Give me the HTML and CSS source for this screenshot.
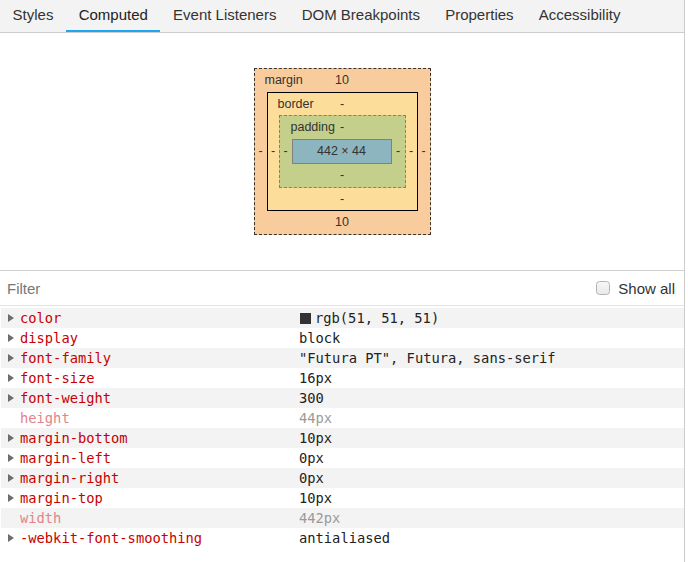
FILE: index.html
```html
<!DOCTYPE html>
<html>
<head>
<meta charset="utf-8">
<link rel="stylesheet" href="styles.css">
</head>
<body>
<div class="panel">
  <nav class="tabs">
    <div class="tab">Styles</div>
    <div class="tab active">Computed</div>
    <div class="tab">Event Listeners</div>
    <div class="tab">DOM Breakpoints</div>
    <div class="tab">Properties</div>
    <div class="tab">Accessibility</div>
  </nav>

  <section class="boxmodel-pane">
    <div class="bm bm-margin">
      <span class="bm-label">margin</span>
      <span class="bm-top">10</span>
      <span class="bm-left">-</span>
      <div class="bm bm-border">
        <span class="bm-label">border</span>
        <span class="bm-top">-</span>
        <span class="bm-left">-</span>
        <div class="bm bm-padding">
          <span class="bm-label">padding</span>
          <span class="bm-top">-</span>
          <span class="bm-left">-</span>
          <div class="bm-content">442 × 44</div>
          <span class="bm-right">-</span>
          <span class="bm-bottom">-</span>
        </div>
        <span class="bm-right">-</span>
        <span class="bm-bottom">-</span>
      </div>
      <span class="bm-right">-</span>
      <span class="bm-bottom">10</span>
    </div>
  </section>

  <div class="filter-bar">
    <span class="filter">Filter</span>
    <label class="show-all"><input class="check" type="checkbox"><span>Show all</span></label>
  </div>

  <ul class="props">
    <li class="prop"><span class="arrow"></span><span class="name">color</span><span class="value"><span class="swatch"></span>rgb(51, 51, 51)</span></li>
    <li class="prop"><span class="arrow"></span><span class="name">display</span><span class="value">block</span></li>
    <li class="prop"><span class="arrow"></span><span class="name">font-family</span><span class="value">"Futura PT", Futura, sans-serif</span></li>
    <li class="prop"><span class="arrow"></span><span class="name">font-size</span><span class="value">16px</span></li>
    <li class="prop"><span class="arrow"></span><span class="name">font-weight</span><span class="value">300</span></li>
    <li class="prop inherited"><span class="noarrow"></span><span class="name">height</span><span class="value">44px</span></li>
    <li class="prop"><span class="arrow"></span><span class="name">margin-bottom</span><span class="value">10px</span></li>
    <li class="prop"><span class="arrow"></span><span class="name">margin-left</span><span class="value">0px</span></li>
    <li class="prop"><span class="arrow"></span><span class="name">margin-right</span><span class="value">0px</span></li>
    <li class="prop"><span class="arrow"></span><span class="name">margin-top</span><span class="value">10px</span></li>
    <li class="prop inherited"><span class="noarrow"></span><span class="name">width</span><span class="value">442px</span></li>
    <li class="prop"><span class="arrow"></span><span class="name">-webkit-font-smoothing</span><span class="value">antialiased</span></li>
  </ul>
</div>
</body>
</html>
```
FILE: styles.css
```css
html, body {
  margin: 0;
  padding: 0;
  background: #fff;
}
body {
  font-family: "Liberation Sans", Arial, sans-serif;
  color: #333;
}
.panel {
  width: 684px;
  height: 562px;
  border-right: 1px solid #cccccc;
  box-sizing: content-box;
}

/* tabs */
.tabs {
  display: flex;
  height: 33px;
  box-sizing: border-box;
  background: #f3f3f3;
  border-bottom: 1px solid #cccccc;
}
.tab {
  height: 32px;
  box-sizing: border-box;
  padding: 0 12.6px;
  font-size: 15px;
  line-height: 30px;
  color: #333;
  border-bottom: 2px solid transparent;
  white-space: nowrap;
}
.tab.active {
  border-bottom-color: #1fa6f0;
  color: #222;
}

/* box model */
.boxmodel-pane {
  display: flex;
  justify-content: center;
  padding: 35px 0;
  border-bottom: 1px solid #d0d0d0;
  font-size: 12.5px;
  color: #333;
}
.bm {
  display: grid;
  grid-template-rows: 23px auto 23px;
}
.bm > span {
  align-self: center;
  line-height: 15px;
  text-align: center;
}
.bm-label {
  grid-row: 1;
  grid-column: 1 / -1;
  justify-self: start;
  padding-left: 10px;
}
.bm-top {
  grid-row: 1;
  grid-column: 1 / -1;
  justify-self: center;
}
.bm-left {
  grid-row: 2;
  grid-column: 1;
}
.bm-right {
  grid-row: 2;
  grid-column: 3;
}
.bm-bottom {
  grid-row: 3;
  grid-column: 1 / -1;
  justify-self: center;
}
.bm-margin {
  grid-template-columns: 12px auto 12px;
  border: 1px dashed #333;
  background: #f9cc9d;
}
.bm-border {
  grid-row: 2;
  grid-column: 2;
  grid-template-columns: 11px auto 11px;
  grid-template-rows: 22px auto 22px;
  border: 1px solid #000;
  background: #fddd9a;
}
.bm-padding {
  grid-row: 2;
  grid-column: 2;
  grid-template-columns: 12px auto 13px;
  border: 1px dashed #808080;
  background: #c3cf8a;
}
.bm-padding > .bm-label {
  padding-left: 11px;
}
.bm-content {
  grid-row: 2;
  grid-column: 2;
  width: 100px;
  height: 25px;
  box-sizing: border-box;
  border: 1px solid #808080;
  background: #8cb5c0;
  text-align: center;
  line-height: 23px;
}

/* filter */
.filter-bar {
  display: flex;
  align-items: center;
  justify-content: space-between;
  height: 34px;
  border-bottom: 1px solid #e4e4e4;
  padding: 0 9px 0 7px;
  font-size: 15px;
}
.filter {
  color: #777;
}
.show-all {
  display: flex;
  align-items: center;
  gap: 8px;
  color: #333;
}
.check {
  appearance: none;
  -webkit-appearance: none;
  margin: 0;
  width: 14px;
  height: 14px;
  box-sizing: border-box;
  border: 1px solid #b3b3b3;
  border-radius: 3.5px;
  background: linear-gradient(#f7f7f7, #e9e9e9);
}

/* properties */
.props {
  list-style: none;
  margin: 0;
  padding: 2px 0 0 1px;
  font-family: "DejaVu Sans Mono", Menlo, monospace;
  font-size: 13.75px;
}
.prop {
  display: grid;
  grid-template-columns: 19px 279px 1fr;
  align-items: center;
  height: 20px;
  line-height: 20px;
  white-space: nowrap;
}
.prop:nth-child(odd) {
  background: #f3f3f3;
}
.arrow {
  width: 0;
  height: 0;
  margin-left: 7px;
  border-left: 6px solid #6e6e6e;
  border-top: 4px solid transparent;
  border-bottom: 4px solid transparent;
}
.name {
  color: #c80000;
}
.value {
  color: #222;
}
.inherited .name {
  color: #e2848a;
}
.inherited .value {
  color: #9a9a9a;
}
.swatch {
  display: inline-block;
  width: 11px;
  height: 11px;
  margin: 0 4px 0 1px;
  background: #333333;
  vertical-align: -1px;
}
```
